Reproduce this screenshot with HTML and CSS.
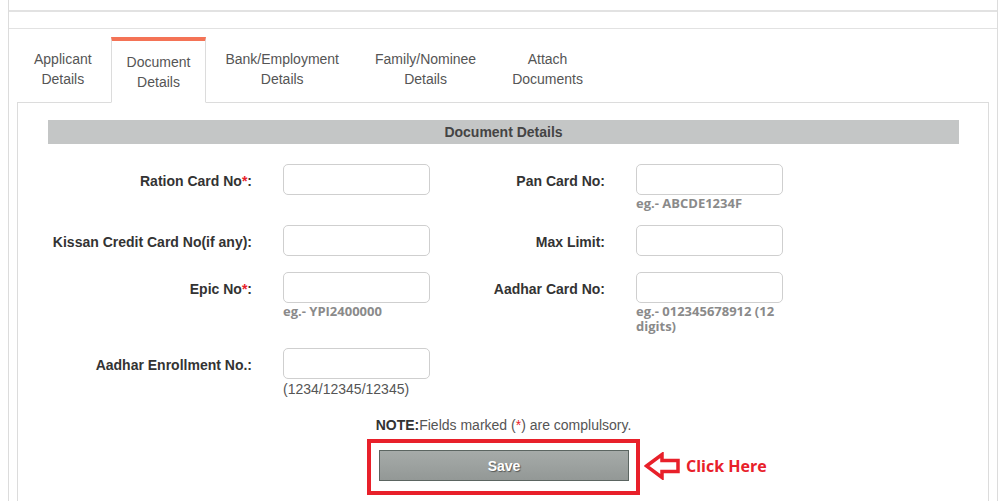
FILE: index.html
```html
<!DOCTYPE html>
<html lang="en">
<head>
<meta charset="utf-8">
<title>Document Details</title>
<link rel="stylesheet" href="styles.css">
</head>
<body>
<div class="page">
  <div class="topbar"></div>
  <div class="subbar"></div>
  <div class="tabs-wrap">
    <ul class="tabs">
      <li class="tab">Applicant<br>Details</li>
      <li class="tab active">Document<br>Details</li>
      <li class="tab">Bank/Employment<br>Details</li>
      <li class="tab">Family/Nominee<br>Details</li>
      <li class="tab">Attach<br>Documents</li>
    </ul>
    <div class="tab-pane">
      <div class="section-title">Document Details</div>
      <div class="form-grid">
        <label class="lbl">Ration Card No<span class="req">*</span>:</label>
        <div class="field"><input class="inp" type="text"></div>
        <label class="lbl">Pan Card No:</label>
        <div class="field"><input class="inp" type="text"><div class="hint">eg.- ABCDE1234F</div></div>

        <label class="lbl">Kissan Credit Card No(if any):</label>
        <div class="field"><input class="inp" type="text"></div>
        <label class="lbl">Max Limit:</label>
        <div class="field"><input class="inp" type="text"></div>

        <label class="lbl">Epic No<span class="req">*</span>:</label>
        <div class="field"><input class="inp" type="text"><div class="hint">eg.- YPI2400000</div></div>
        <label class="lbl">Aadhar Card No:</label>
        <div class="field"><input class="inp" type="text"><div class="hint">eg.- 012345678912 (12 digits)</div></div>

        <label class="lbl">Aadhar Enrollment No.:</label>
        <div class="field"><input class="inp" type="text"><div class="hint-plain">(1234/12345/12345)</div></div>
      </div>
      <p class="note"><b>NOTE:</b>Fields marked (<span class="req">*</span>) are complulsory.</p>
      <div class="actions">
        <div class="highlight">
          <button class="btn-save" type="button">Save</button>
          <div class="callout">
            <svg class="arrow" width="36" height="28" viewBox="0 0 36 28" aria-hidden="true">
              <path d="M2.5 14 L18 2.5 L18 8.5 L34 8.5 L34 19.5 L18 19.5 L18 25.5 Z" fill="none" stroke="#e8202a" stroke-width="3.5" stroke-linejoin="miter"/>
            </svg>
            <span class="callout-text">Click Here</span>
          </div>
        </div>
      </div>
    </div>
  </div>
</div>
</body>
</html>
```

FILE: styles.css
```css
* { box-sizing: border-box; }
html, body { margin: 0; padding: 0; background: #fff; }
body {
  font-family: "Liberation Sans", Arial, sans-serif;
  font-size: 14px;
  color: #555;
  overflow: hidden;
}
.page {
  margin-left: 8px;
  width: 990px;
  height: 501px;
  border-left: 1px solid #dcdcdc;
  border-right: 1px solid #dcdcdc;
  overflow: hidden;
}
.topbar {
  height: 12px;
  border-bottom: 2px solid #e2e2e2;
}
.subbar {
  height: 17px;
  border-bottom: 1px solid #e2e2e2;
}
.tabs-wrap {
  padding: 0 8px;
}
.tabs {
  list-style: none;
  margin: 0;
  padding: 8px 0 0 0;
  display: flex;
  align-items: flex-end;
  position: relative;
  z-index: 1;
}
.tab {
  padding: 10px 17px 13px;
  margin-right: 2px;
  line-height: 20px;
  text-align: center;
  color: #555;
}
.tab.active {
  border-top: 4px solid #f47356;
  border-left: 1px solid #dcdcdc;
  border-right: 1px solid #dcdcdc;
  border-bottom: 1px solid #fff;
  background: #fff;
  padding: 11px 15px 10px;
  margin-bottom: -1px;
}
.tab-pane {
  border: 1px solid #dcdcdc;
  border-bottom: none;
  padding: 17px 29px 40px 30px;
  height: 420px;
}
.section-title {
  height: 24px;
  line-height: 24px;
  background: #c4c6c6;
  color: #444;
  font-weight: bold;
  font-size: 14px;
  text-align: center;
}
.form-grid {
  margin-top: 20px;
  display: grid;
  grid-template-columns: 204px 147px 144px 147px;
  column-gap: 31px;
  row-gap: 14px;
  align-items: start;
}
.lbl {
  display: block;
  text-align: right;
  font-weight: bold;
  font-size: 14px;
  line-height: 31px;
  padding-top: 2px;
  color: #333;
  white-space: nowrap;
}
.req { color: #e8202a; }
.inp {
  display: block;
  width: 147px;
  height: 31px;
  margin: 0 0 1px;
  border: 1px solid #cfcfcf;
  border-radius: 5px;
  background: #fff;
}
.hint {
  font-family: "Open Sans", "Liberation Sans", sans-serif;
  font-weight: 700;
  font-size: 13px;
  line-height: 15px;
  color: #8a8a8a;
}
.hint-plain {
  font-size: 14px;
  line-height: 18px;
  color: #555;
}
.note {
  margin: 17px 0 0;
  text-align: center;
  line-height: 20px;
  color: #555;
}
.note b { color: #333; }
.actions {
  margin-top: 4px;
  text-align: center;
}
.highlight {
  display: inline-block;
  position: relative;
  border: 4px solid #e8202a;
  padding: 7px 7px 10px 8px;
  vertical-align: top;
}
.btn-save {
  display: block;
  width: 250px;
  height: 31px;
  border: 1px solid #5b6561;
  background: linear-gradient(#a6aba9, #939896);
  color: #fff;
  font-family: "Liberation Sans", Arial, sans-serif;
  font-weight: bold;
  font-size: 14px;
  text-shadow: 1px 1px 1px rgba(0,0,0,0.45);
  padding: 0;
}
.callout {
  position: absolute;
  left: calc(100% + 8px);
  top: 9px;
  display: flex;
  align-items: center;
  gap: 6px;
}
.arrow { display: block; }
.callout-text {
  font-family: "Open Sans", "Liberation Sans", sans-serif;
  font-weight: 700;
  font-size: 16px;
  color: #e8202a;
  white-space: nowrap;
}
```
